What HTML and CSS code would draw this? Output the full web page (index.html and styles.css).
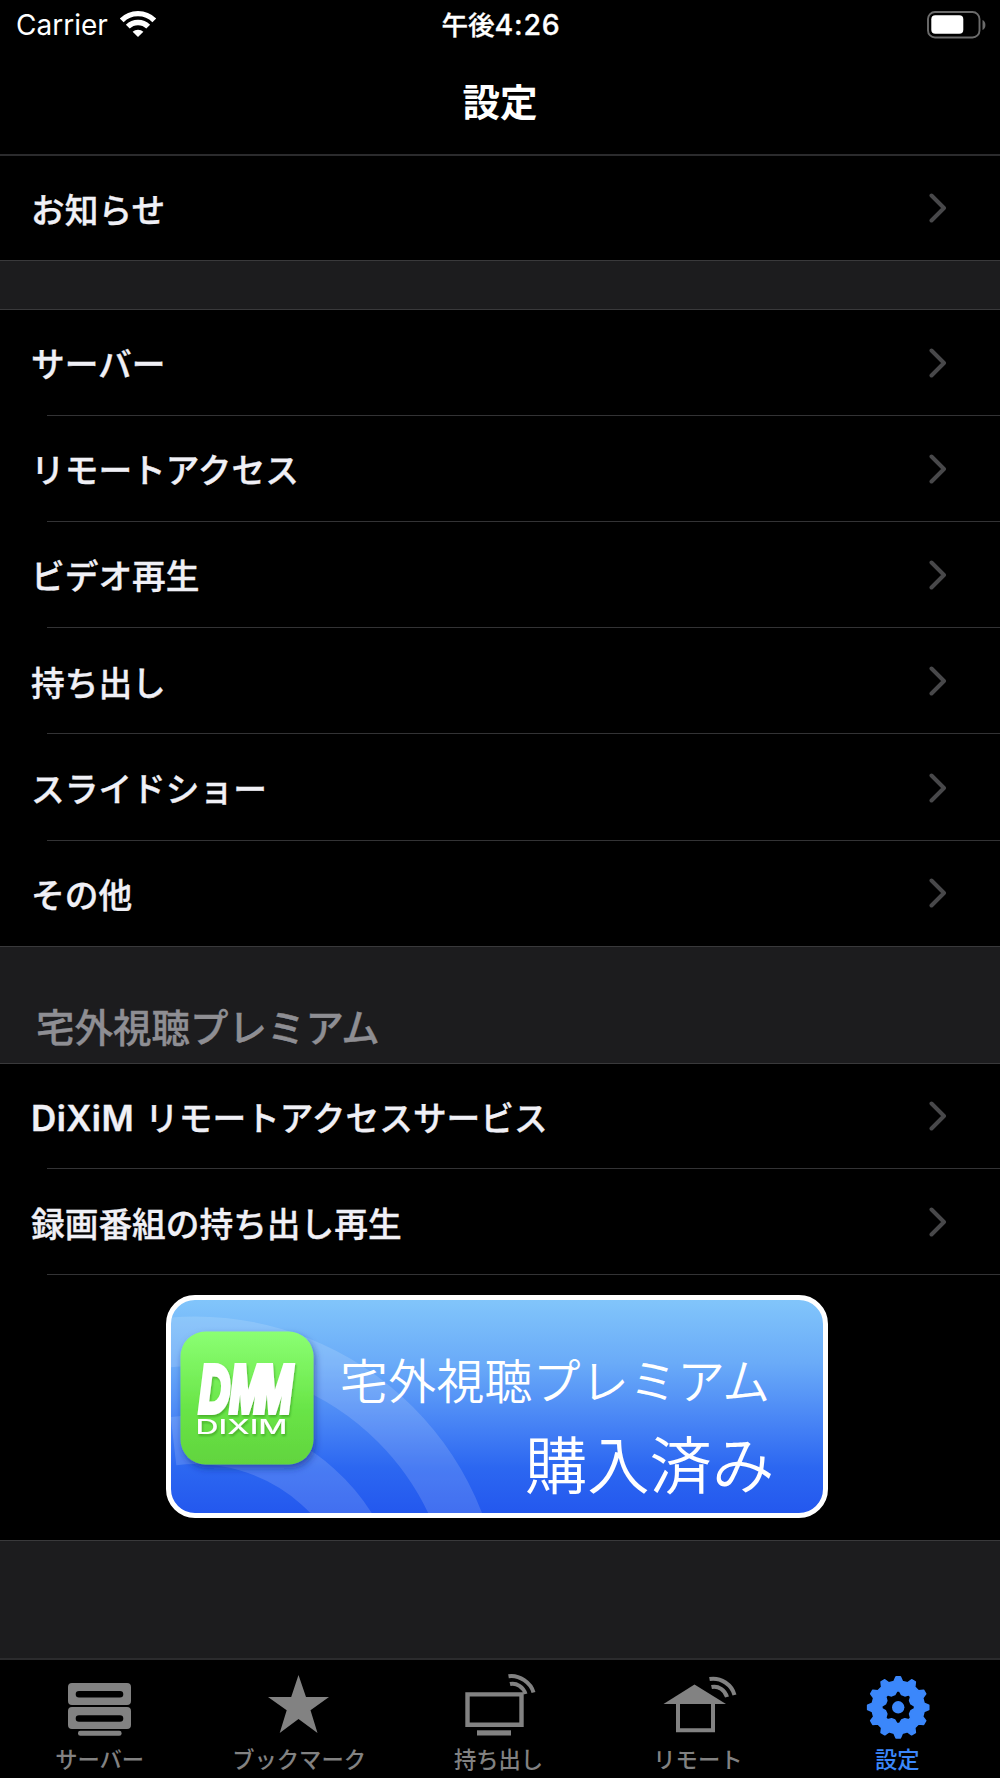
FILE: index.html
```html
<!DOCTYPE html>
<html lang="ja">
<head>
  <meta charset="UTF-8">
  <meta name="viewport" content="width=device-width, initial-scale=1.0">
  <title>設定</title>
  <link rel="stylesheet" href="styles.css">
</head>
<body>
  <svg class="defs" width="0" height="0">
    <symbol id="chevron" viewBox="0 0 18 30">
      <path d="M2.5 2.5 L15 15 L2.5 27.5" fill="none" stroke="currentColor" stroke-width="4" stroke-linecap="round" stroke-linejoin="round"/>
    </symbol>
  </svg>

  <header>
    <div class="status">
      <div class="carrier">
        <span>Carrier</span>
        <svg width="38" height="28" viewBox="0 0 38 28">
          <g fill="none" stroke="#fff" stroke-width="5.4">
            <path d="M2.7 10.4 A23 23 0 0 1 35.3 10.4"/>
            <path d="M8.8 16.7 A14.4 14.4 0 0 1 29.2 16.7"/>
          </g>
          <path d="M19 27 L13.6 21.8 A7.8 7.8 0 0 1 24.4 21.8 Z" fill="#fff"/>
        </svg>
      </div>
      <div class="clock">午後<span>4:26</span></div>
      <div class="battery">
        <svg width="59" height="28" viewBox="0 0 59 28">
          <rect x="1" y="1" width="51.5" height="25.5" rx="7" fill="none" stroke="#6b6b6b" stroke-width="1.9"/>
          <rect x="4.3" y="4.2" width="32" height="18.6" rx="4" fill="#fff"/>
          <path d="M55.5 9 Q58.4 10.4 58.4 14 Q58.4 17.6 55.5 19 Z" fill="#6b6b6b"/>
        </svg>
      </div>
    </div>
    <h1>設定</h1>
  </header>

  <main>
    <ul class="list first">
      <li><span>お知らせ</span><svg class="chevron"><use href="#chevron"/></svg></li>
    </ul>
    <div class="gap"></div>
    <ul class="list">
      <li><span>サーバー</span><svg class="chevron"><use href="#chevron"/></svg></li>
      <li><span>リモートアクセス</span><svg class="chevron"><use href="#chevron"/></svg></li>
      <li><span>ビデオ再生</span><svg class="chevron"><use href="#chevron"/></svg></li>
      <li><span>持ち出し</span><svg class="chevron"><use href="#chevron"/></svg></li>
      <li><span>スライドショー</span><svg class="chevron"><use href="#chevron"/></svg></li>
      <li><span>その他</span><svg class="chevron"><use href="#chevron"/></svg></li>
    </ul>
    <h2>宅外視聴プレミアム</h2>
    <ul class="list">
      <li><span><b>DiXiM</b> リモートアクセスサービス</span><svg class="chevron"><use href="#chevron"/></svg></li>
      <li><span>録画番組の持ち出し再生</span><svg class="chevron"><use href="#chevron"/></svg></li>
      <li class="premium">
        <svg width="662" height="223" viewBox="166 1294.5 662 223">
          <defs>
            <linearGradient id="sky" x1="0" y1="0" x2="0" y2="1">
              <stop offset="0" stop-color="#82c6fb"/>
              <stop offset="0.3" stop-color="#6aabf8"/>
              <stop offset="0.6" stop-color="#4480f5"/>
              <stop offset="0.78" stop-color="#2c67f1"/>
              <stop offset="1" stop-color="#2357ee"/>
            </linearGradient>
            <linearGradient id="green" x1="0" y1="0" x2="0" y2="1">
              <stop offset="0" stop-color="#8bff73"/>
              <stop offset="0.6" stop-color="#68e446"/>
              <stop offset="1" stop-color="#62d43e"/>
            </linearGradient>
            <clipPath id="inside">
              <rect x="171" y="1299.5" width="652" height="213" rx="24"/>
            </clipPath>
            <filter id="shadow" x="-20%" y="-20%" width="150%" height="150%">
              <feDropShadow dx="2" dy="4" stdDeviation="3.5" flood-color="#0a2c80" flood-opacity="0.55"/>
            </filter>
            <filter id="logo-shadow" x="-20%" y="-20%" width="150%" height="150%">
              <feDropShadow dx="1" dy="2" stdDeviation="1" flood-color="#1c6a10" flood-opacity="0.4"/>
            </filter>
          </defs>
          <rect x="168.5" y="1297" width="657" height="218" rx="26.5" fill="url(#sky)"/>
          <!-- signal waves -->
          <g clip-path="url(#inside)" fill="none" stroke="#fff" stroke-opacity="0.14">
            <circle cx="195" cy="1624" r="283.2" stroke-width="49.5"/>
            <path d="M173.5 1440.6 A184.7 184.7 0 0 1 379.7 1624" stroke-width="48.5"/>
          </g>
          <rect x="168.5" y="1297" width="657" height="218" rx="26.5" fill="none" stroke="#fff" stroke-width="5"/>
          <rect x="180.5" y="1331" width="133" height="133" rx="25" fill="url(#green)" filter="url(#shadow)"/>
          <g fill="#fff" filter="url(#logo-shadow)">
            <text class="dmm" transform="translate(199 1411) scale(0.64 1)" x="0 48 90">DMM</text>
            <text class="dixim" x="195.5" y="1433" textLength="92" lengthAdjust="spacingAndGlyphs">DIXIM</text>
          </g>
          <text class="plan" x="340" y="1398.5" textLength="430">宅外視聴プレミアム</text>
          <text class="bought" x="525" y="1488">購入済み</text>
        </svg>
      </li>
    </ul>
  </main>

  <nav>
    <a>
      <svg width="72" height="68" viewBox="0 0 72 68">
        <path fill-rule="evenodd" fill="currentColor" d="M8 15h55a4 4 0 0 1 4 4v14a4 4 0 0 1-4 4H8a4 4 0 0 1-4-4V19a4 4 0 0 1 4-4ZM15 23a3.2 3.2 0 0 0 0 6.6h41a3.2 3.2 0 0 0 0-6.6ZM8 39h55a4 4 0 0 1 4 4v14a4 4 0 0 1-4 4H8a4 4 0 0 1-4-4V43a4 4 0 0 1 4-4ZM15 47.2a3.2 3.2 0 0 0 0 6.6h41a3.2 3.2 0 0 0 0-6.6Z"/>
        <rect x="14" y="62.7" width="43.6" height="5" rx="2.3" fill="currentColor"/>
      </svg>
      <span>サーバー</span>
    </a>
    <a>
      <svg width="72" height="68" viewBox="0 0 72 68">
        <path fill="currentColor" d="M35.5 7 L43 29 L66 29 L47.5 42.3 L54.5 65 L35.5 51 L16.7 65 L23.7 42.3 L5 29 L28.2 29 Z"/>
      </svg>
      <span>ブックマーク</span>
    </a>
    <a>
      <svg width="72" height="68" viewBox="0 0 72 68">
        <g fill="none" stroke="currentColor" stroke-width="4.4">
          <path d="M5.5 26.4 H59.5 V56.8 H5.5 Z"/>
          <path d="M46.5 8.2 C57.5 6.5 69 15 71.5 24.5" stroke-width="4"/>
          <path d="M48 16 C54.5 14.5 61.5 19 63.5 26" stroke-width="4"/>
        </g>
        <rect x="15" y="62.3" width="34" height="5.2" fill="currentColor"/>
      </svg>
      <span>持ち出し</span>
    </a>
    <a>
      <svg width="76" height="68" viewBox="0 0 76 68">
        <path fill="currentColor" d="M34.5 16.5 L66 36 H3.5 Z"/>
        <g fill="none" stroke="currentColor" stroke-width="4">
          <path d="M18 34 V62.3 H53 V34"/>
          <path d="M49.5 11 C61 9 72 17 74.5 27"/>
          <path d="M51.5 19 C58.5 17.5 65 22 67 29"/>
        </g>
      </svg>
      <span>リモート</span>
    </a>
    <a class="active">
      <svg width="72" height="68" viewBox="0 0 72 68">
        <g id="gear" transform="translate(37.2 39.3)"></g>
      </svg>
      <span>設定</span>
    </a>
  </nav>

  <script>
    const gear = document.getElementById('gear');

    // closed outline with flat-tipped teeth
    function cog(teeth, tip, root, tipHalf, rootHalf) {
      const points = [];
      for (let i = 0; i < teeth; i++) {
        const mid = i * 2 * Math.PI / teeth;
        [[root, -rootHalf], [tip, -tipHalf], [tip, tipHalf], [root, rootHalf]].forEach(([r, a]) => {
          points.push((r * Math.sin(mid + a)).toFixed(2) + ' ' + (-r * Math.cos(mid + a)).toFixed(2));
        });
      }
      return 'M' + points.join('L') + 'Z';
    }

    gear.innerHTML = `
      <path fill="currentColor" stroke="currentColor" stroke-width="1.6" stroke-linejoin="round" fill-rule="evenodd"
        d="${cog(12, 30.6, 26.2, 0.07, 0.16)}${cog(8, 16.4, 13.2, 0.08, 0.26)}"/>
      <circle r="6.2" fill="currentColor"/>
    `;
  </script>
</body>
</html>
```
FILE: styles.css
```css
* { box-sizing: border-box; }
body { margin: 0; height: 1778px; display: flex; flex-direction: column; background: #000; color: #fff; font-family: Inter, "Noto Sans CJK JP", sans-serif; overflow: hidden; }
h1, h2, ul { margin: 0; padding: 0; font-weight: normal; list-style: none; }
.defs { display: block; flex: none; }

header { height: 156px; flex: none; border-bottom: 2px solid #2b2b2d; }
.status { height: 50px; padding: 0 14px 0 16px; display: grid; grid-template-columns: 1fr auto 1fr; align-items: center; }
.carrier { display: flex; align-items: center; gap: 11px; font-size: 28px; }
.carrier svg { margin-bottom: 3px; }
.clock { font-size: 26.6px; font-weight: 500; line-height: 46px; -webkit-text-stroke: 0.3px #fff; }
.clock span { font-size: 28.5px; letter-spacing: 0.8px; }
.battery { display: flex; justify-content: flex-end; padding-bottom: 1px; }
h1 { height: 105px; line-height: 105px; text-align: center; font-size: 37.5px; font-weight: bold; }

main { flex: 1; background: #1c1c1e; }
.list { background: #000; border-top: 1px solid #39393b; border-bottom: 1px solid #39393b; }
.list.first { border-top: 0; }
.list li { height: 106.3px; padding: 0 53px 0 31px; display: flex; align-items: center; justify-content: space-between; font-size: 33.7px; font-weight: 500; color: #f0f0f6; -webkit-text-stroke: 0.35px; background: linear-gradient(#333335, #333335) no-repeat 47px 100% / 100% 1px; }
.list li:last-child { height: 105px; background: none; }
.list.first li:last-child { height: 104px; }
.list li:first-child:not(:last-child) { height: 105.5px; }
.list b { font-weight: 600; font-size: 35px; letter-spacing: 0.4px; margin-right: 2px; }
.chevron { width: 18px; height: 30px; color: #48484a; }
.gap { height: 48px; }
h2 { height: 116px; padding: 53px 0 0 36px; line-height: 56px; font-size: 38.5px; font-weight: 500; color: #8e8e93; -webkit-text-stroke: 0.35px; }

.list li.premium:last-child { height: 265px; padding: 20px 0 0 166px; align-items: flex-start; justify-content: flex-start; -webkit-text-stroke: 0; }
.premium text { font-family: "Noto Sans CJK JP", sans-serif; fill: #fff; }
.premium .plan { font-size: 47.8px; font-weight: 350; }
.premium .bought { font-size: 62.3px; font-weight: 350; }
.premium .dmm { font: italic bold 67px "Liberation Sans", sans-serif; stroke: #fff; stroke-width: 6px; }
.premium .dixim { font: 500 20.5px Inter, sans-serif; }

nav { height: 120px; flex: none; display: grid; grid-template-columns: repeat(5, 1fr); padding-right: 3px; border-top: 2px solid #2b2b2d; }
nav a { display: flex; flex-direction: column; align-items: center; padding-top: 8px; font-size: 22.3px; line-height: 36px; font-weight: 500; color: #828282; }
nav svg { overflow: visible; }
nav span { margin-top: 6px; }
nav .active { color: #3b87fb; }
```
